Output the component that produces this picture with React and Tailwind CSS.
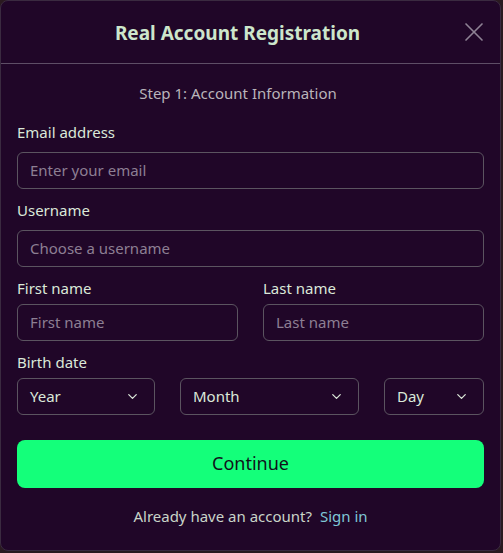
import React from "react";
import { X, ChevronDown } from "lucide-react";

function Field({ label, placeholder, gap = "mb-[10px]" }) {
  return (
    <div className="flex flex-col">
      <label className={"text-[15px] leading-5 text-[#dbe8d9] " + gap}>{label}</label>
      <input
        placeholder={placeholder}
        className="h-[37px] w-full rounded-md border border-[#5b5460] bg-transparent px-3 text-[15px] text-[#dbe8d9] placeholder:text-[#8d7f93] outline-none"
      />
    </div>
  );
}

function Select({ label, className }) {
  return (
    <div
      className={
        "flex h-[37px] items-center justify-between rounded-md border border-[#5b5460] pl-3 pr-[14px] text-[15px] text-[#dbe8d9] " +
        className
      }
    >
      <span>{label}</span>
      <ChevronDown size={15} strokeWidth={2} className="text-[#dbe8d9]" />
    </div>
  );
}

export default function App() {
  return (
    <div
      className="h-[553px] w-[503px] bg-[#2a1a20] p-0"
      style={{ fontFamily: '"Noto Sans", "Open Sans", sans-serif' }}
    >
      <div className="flex h-[551px] w-[501px] flex-col rounded-lg border border-[#3a2a40] bg-[#200628]">
        <div className="flex h-[63px] items-center border-b border-[#5e4e66] pl-4 pr-[10px]">
          <h2 className="mt-[3px] flex-1 text-center text-[19px] font-bold text-[#cde6cc]">
            Real Account Registration
          </h2>
          <button className="text-[#8e8294]">
            <X size={32} strokeWidth={1.25} />
          </button>
        </div>

        <div className="flex flex-col px-4 pt-[18px]">
          <p className="pr-[25px] text-center text-[15px] text-[#b9b4ba]">Step 1: Account Information</p>

          <div className="mt-[17px] flex flex-col gap-[11px]">
            <Field label="Email address" placeholder="Enter your email" />
            <Field label="Username" placeholder="Choose a username" />
            <div className="grid grid-cols-2 gap-[25px]">
              <Field label="First name" placeholder="First name" gap="mb-[6px]" />
              <Field label="Last name" placeholder="Last name" gap="mb-[6px]" />
            </div>
            <div className="flex flex-col">
              <label className="text-[15px] leading-5 text-[#dbe8d9] mb-[6px]">Birth date</label>
              <div className="flex gap-[25px]">
                <Select label="Year" className="w-[138px]" />
                <Select label="Month" className="w-[179px]" />
                <Select label="Day" className="flex-1" />
              </div>
            </div>
          </div>

          <button className="mt-[25px] h-[48px] w-full rounded-lg bg-[#14ff7a] text-[18px] text-[#10121a]">
            Continue
          </button>

          <p className="mt-[17px] text-center text-[15px] text-[#c9d4c8]">
            Already have an account?{" "}
            <a className="ml-1 text-[#7fc6d6]">Sign in</a>
          </p>
        </div>
      </div>
    </div>
  );
}
